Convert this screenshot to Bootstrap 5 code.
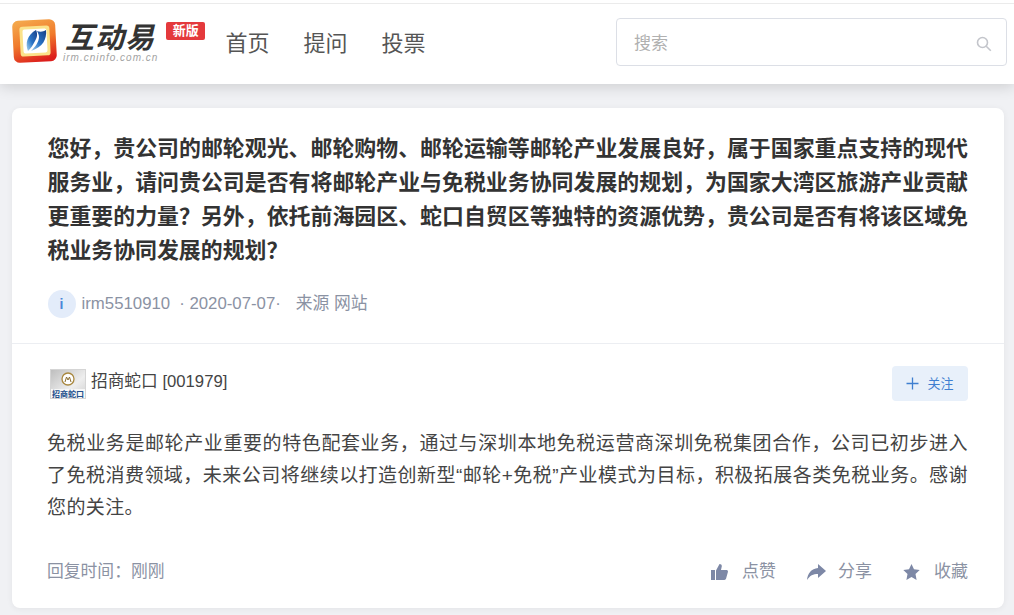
<!DOCTYPE html>
<html lang="zh">
<head>
<meta charset="utf-8">
<title>互动易</title>
<link href="https://cdn.jsdelivr.net/npm/bootstrap@5.3.0/dist/css/bootstrap.min.css" rel="stylesheet">
<style>
html,body{height:615px;overflow:hidden}
body{background:#f0f1f4;font-family:"Liberation Sans","Noto Sans CJK SC",sans-serif;color:#333}
.top-bar{height:84px;background:#fff;box-shadow:0 2px 14px rgba(0,0,0,.16)}
.top-line{height:4px;border-bottom:1px solid #ebebeb}
.top-inner{height:80px;padding:0 7px 0 12px}
.logo-mark{margin-top:-6px}
.brand-text{margin-top:-2px;margin-left:7px}
.brand-word{font-size:29px;font-weight:700;font-style:italic;line-height:30px;color:#333;letter-spacing:1px}
.brand-url{font-size:10px;font-style:italic;color:#a3a3a3;line-height:10px;letter-spacing:1px;margin-left:-2px}
.brand-new{background:#e4393c;color:#fff;font-size:13px;font-weight:700;line-height:18px;padding:0 6.500px;border-radius:2px;margin-left:8px;margin-top:-26px}
.main-link{font-size:22px;color:#555;text-decoration:none}
.nav-gap{gap:34px;margin-left:20px;margin-top:-2px}
.search-box{width:391px;height:48px;border:1px solid #dcdfe6;border-radius:4px;padding:3px 14px 0 17px;font-size:17px;color:#b0b0b0;margin-top:-4px}
.q-card{margin:24px 10px 0 12px;height:500px;border-radius:8px;box-shadow:0 1px 6px rgba(0,0,0,.06)}
.q-top{padding:24px 36px 0 35.500px;height:236px;border-bottom:1px solid #eceef2}
.q-title{font-size:21.900px;font-weight:700;line-height:34px;color:#333;margin:0 0 22px;text-align:justify}
.q-meta{font-size:16.800px;color:#8b92a3}
.meta-date{margin-left:9px}
.meta-source{margin-left:15px}
.avatar-dot{width:28px;height:28px;border-radius:50%;background:#e3ecfa;color:#4a86d8;font-size:14px;font-weight:700;margin-right:6px}
.q-bottom{padding:22px 36px 0 35px}
.co-name{font-size:16.700px;color:#444;margin-left:5px;margin-top:-4px}
.co-logo{width:36px;height:30px;display:block;margin-left:3px;margin-top:1px}
.follow{background:#e8f0fa;color:#3f7fd0;border:0;border-radius:4px;width:76px;height:35px;font-size:13px;padding:0}
.answer{font-size:19px;line-height:32px;letter-spacing:.4px;color:#444;margin:27px 0 0;width:921px;text-align:justify}
.foot-row{margin-top:35px;font-size:16.800px;color:#8b92a3}
.act{gap:14px;font-size:17px}
.act-share{gap:12px}
.act-row{gap:31px}
</style>
</head>
<body>
<header class="top-bar">
  <div class="top-line"></div>
  <div class="top-inner d-flex align-items-center">
    <svg class="logo-mark flex-shrink-0" width="46" height="46" viewBox="0 0 46 46" role="img" aria-label="互动易标志">
      <defs>
        <linearGradient id="frameGrad" x1="0.3" y1="0" x2="0.6" y2="1"><stop offset="0" stop-color="#f4a64a"/><stop offset=".5" stop-color="#f07a2c"/><stop offset="1" stop-color="#dc1f1c"/></linearGradient>
        <linearGradient id="leafGrad" x1="0" y1="1" x2="1" y2="0"><stop offset="0" stop-color="#a8d4ee"/><stop offset=".45" stop-color="#2a76c8"/><stop offset="1" stop-color="#173f86"/></linearGradient>
      </defs>
      <rect x="1" y="2" width="43" height="42" rx="6" fill="url(#frameGrad)" transform="rotate(-3 23 23)"/>
      <rect x="8" y="8" width="30" height="30" rx="3" fill="#fbe28a" transform="rotate(-3 23 23)"/>
      <rect x="11" y="11" width="24" height="24" rx="2" fill="#fff" transform="rotate(-3 23 23)"/>
      <path d="M16 33C13 26 15 17 24 12c2 4 1 8-1 11-2 4-4 7-7 10z" fill="url(#leafGrad)"/>
      <path d="M25 13c3 1 6 1 9-1 1 9-3 17-15 21 4-4 8-9 8-14 0-2-1-4-2-6z" fill="url(#leafGrad)"/>
    </svg>
    <div class="brand-text d-flex flex-column">
      <span class="brand-word">互动易</span>
      <span class="brand-url">irm.cninfo.com.cn</span>
    </div>
    <span class="brand-new">新版</span>
    <nav class="d-flex nav-gap">
      <a class="main-link" href="#">首页</a>
      <a class="main-link" href="#">提问</a>
      <a class="main-link" href="#">投票</a>
    </nav>
    <div class="search-box d-flex align-items-center justify-content-between ms-auto">
      <span>搜索</span>
      <svg width="16" height="16" viewBox="0 0 16 16" fill="none" stroke="#c3c5cb" stroke-width="1.6" aria-hidden="true"><circle cx="6.5" cy="6.5" r="5"/><path d="M10.2 10.2l4.6 4.6"/></svg>
    </div>
  </div>
</header>
<main class="q-card card border-0 bg-white">
  <section class="q-top">
    <h1 class="q-title">您好，贵公司的邮轮观光、邮轮购物、邮轮运输等邮轮产业发展良好，属于国家重点支持的现代服务业，请问贵公司是否有将邮轮产业与免税业务协同发展的规划，为国家大湾区旅游产业贡献更重要的力量？另外，依托前海园区、蛇口自贸区等独特的资源优势，贵公司是否有将该区域免税业务协同发展的规划？</h1>
    <div class="q-meta d-flex align-items-center">
      <span class="avatar-dot d-flex align-items-center justify-content-center">i</span>
      <span>irm5510910</span>
      <span class="meta-date">· 2020-07-07·</span>
      <span class="meta-source">来源 网站</span>
    </div>
  </section>
  <section class="q-bottom">
    <div class="d-flex align-items-center justify-content-between">
      <div class="d-flex align-items-center">
        <svg class="co-logo" viewBox="0 0 36 30" role="img" aria-label="招商蛇口标志">
          <defs><linearGradient id="coBg" x1="0" y1="0" x2="1" y2="1"><stop offset="0" stop-color="#bdbdbd"/><stop offset=".6" stop-color="#eeeeee"/><stop offset="1" stop-color="#cfcfcf"/></linearGradient></defs>
          <rect x=".5" y=".5" width="35" height="29" fill="url(#coBg)" stroke="#d5d5d5"/>
          <rect x="1" y="20" width="34" height="9" fill="#f7f7f7"/>
          <circle cx="18" cy="10" r="6" fill="#fff" stroke="#a9883f" stroke-width="1.3"/>
          <path d="M15 13l1.500-5 1.500 3 1.500-3 1.500 5" fill="none" stroke="#8a6d2f" stroke-width="1"/>
          <text x="18" y="28" text-anchor="middle" font-size="8" font-weight="700" fill="#24508c" font-family="'Noto Sans CJK SC',sans-serif">招商蛇口</text>
        </svg>
        <span class="co-name">招商蛇口 [001979]</span>
      </div>
      <button class="follow btn d-flex align-items-center justify-content-center" type="button">
        <svg width="13" height="13" viewBox="0 0 13 13" stroke="#3f7fd0" stroke-width="1.3" aria-hidden="true" class="me-1"><path d="M6.500 .5v12M.5 6.500h12"/></svg>
        <span class="ms-1">关注</span>
      </button>
    </div>
    <p class="answer">免税业务是邮轮产业重要的特色配套业务，通过与深圳本地免税运营商深圳免税集团合作，公司已初步进入了免税消费领域，未来公司将继续以打造创新型“邮轮+免税”产业模式为目标，积极拓展各类免税业务。感谢您的关注。</p>
    <div class="foot-row d-flex align-items-center justify-content-between">
      <span>回复时间：刚刚</span>
      <div class="act-row d-flex">
        <span class="act d-flex align-items-center">
          <svg width="17" height="16" viewBox="0 0 17 16" fill="#7d88a6" aria-hidden="true"><rect y="6" width="4" height="10"/><path d="M5 6.500L8.500 0c1.800 0 2.600 1.200 2.200 2.800L10 6h5.500c1 0 1.700 1 1.400 2l-1.800 6.600c-.2.800-.9 1.400-1.700 1.400H5z"/></svg>
          点赞
        </span>
        <span class="act act-share d-flex align-items-center">
          <svg width="19" height="16" viewBox="0 0 19 16" fill="#7d88a6" aria-hidden="true"><path d="M11 0l8 7-8 7v-4C6 10 3 11.500 0 16 .5 9.500 4.500 4.500 11 4z"/></svg>
          分享
        </span>
        <span class="act d-flex align-items-center">
          <svg width="17" height="16" viewBox="0 0 17 16" fill="#7d88a6" aria-hidden="true"><path d="M8.500 0l2.500 5.300 5.700.7-4.200 4 1.100 6-5.100-2.900L3.400 16l1.100-6L.3 6 6 5.300z"/></svg>
          收藏
        </span>
      </div>
    </div>
  </section>
</main>
</body>
</html>
